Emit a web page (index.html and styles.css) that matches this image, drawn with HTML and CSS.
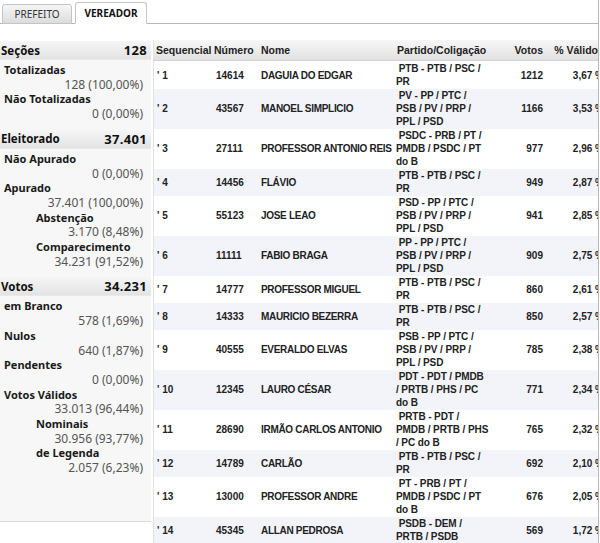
FILE: index.html
```html
<!DOCTYPE html>
<html lang="pt-BR">
<head>
<meta charset="utf-8">
<title>Resultado - Vereador</title>
<link rel="stylesheet" href="styles.css">
</head>
<body>
<div class="page">
  <div class="tabs">
    <div class="tab">PREFEITO</div>
    <div class="tab active">VEREADOR</div>
  </div>
  <div class="main">
    <aside class="summary">
      <div class="sec-head"><span>Seções</span><span class="sec-val">128</span></div>
      <div class="sec-body">
        <div class="lbl">Totalizadas</div>
        <div class="val">128 (100,00%)</div>
        <div class="lbl">Não Totalizadas</div>
        <div class="val">0 (0,00%)</div>
      </div>
      <div class="sec-head"><span>Eleitorado</span><span class="sec-val">37.401</span></div>
      <div class="sec-body">
        <div class="lbl">Não Apurado</div>
        <div class="val">0 (0,00%)</div>
        <div class="lbl">Apurado</div>
        <div class="val">37.401 (100,00%)</div>
        <div class="lbl sub">Abstenção</div>
        <div class="val">3.170 (8,48%)</div>
        <div class="lbl sub">Comparecimento</div>
        <div class="val">34.231 (91,52%)</div>
      </div>
      <div class="sec-head"><span>Votos</span><span class="sec-val">34.231</span></div>
      <div class="sec-body last">
        <div class="lbl">em Branco</div>
        <div class="val">578 (1,69%)</div>
        <div class="lbl">Nulos</div>
        <div class="val">640 (1,87%)</div>
        <div class="lbl">Pendentes</div>
        <div class="val">0 (0,00%)</div>
        <div class="lbl">Votos Válidos</div>
        <div class="val">33.013 (96,44%)</div>
        <div class="lbl sub">Nominais</div>
        <div class="val">30.956 (93,77%)</div>
        <div class="lbl sub">de Legenda</div>
        <div class="val">2.057 (6,23%)</div>
      </div>
    </aside>
    <div class="results">
      <table class="grid">
        <colgroup>
          <col class="c-seq"><col class="c-num"><col class="c-nome"><col class="c-part"><col class="c-votos"><col class="c-pct">
        </colgroup>
        <thead>
          <tr><th class="t-seq">Sequencial</th><th class="t-num">Número</th><th class="t-nome">Nome</th><th class="t-part">Partido/Coligação</th><th class="t-votos">Votos</th><th class="t-pct">% Válido</th></tr>
        </thead>
        <tbody>
          <tr><td class="seq">' 1</td><td class="num">14614</td><td class="nome">DAGUIA DO EDGAR</td><td class="part">&nbsp;PTB - PTB / PSC /<br>PR</td><td class="votos">1212</td><td class="pct">3,67 %</td></tr>
          <tr><td class="seq">' 2</td><td class="num">43567</td><td class="nome">MANOEL SIMPLICIO</td><td class="part">&nbsp;PV - PP / PTC /<br>PSB / PV / PRP /<br>PPL / PSD</td><td class="votos">1166</td><td class="pct">3,53 %</td></tr>
          <tr><td class="seq">' 3</td><td class="num">27111</td><td class="nome">PROFESSOR ANTONIO REIS</td><td class="part">&nbsp;PSDC - PRB / PT /<br>PMDB / PSDC / PT<br>do B</td><td class="votos">977</td><td class="pct">2,96 %</td></tr>
          <tr><td class="seq">' 4</td><td class="num">14456</td><td class="nome">FLÁVIO</td><td class="part">&nbsp;PTB - PTB / PSC /<br>PR</td><td class="votos">949</td><td class="pct">2,87 %</td></tr>
          <tr><td class="seq">' 5</td><td class="num">55123</td><td class="nome">JOSE LEAO</td><td class="part">&nbsp;PSD - PP / PTC /<br>PSB / PV / PRP /<br>PPL / PSD</td><td class="votos">941</td><td class="pct">2,85 %</td></tr>
          <tr><td class="seq">' 6</td><td class="num">11111</td><td class="nome">FABIO BRAGA</td><td class="part">&nbsp;PP - PP / PTC /<br>PSB / PV / PRP /<br>PPL / PSD</td><td class="votos">909</td><td class="pct">2,75 %</td></tr>
          <tr><td class="seq">' 7</td><td class="num">14777</td><td class="nome">PROFESSOR MIGUEL</td><td class="part">&nbsp;PTB - PTB / PSC /<br>PR</td><td class="votos">860</td><td class="pct">2,61 %</td></tr>
          <tr><td class="seq">' 8</td><td class="num">14333</td><td class="nome">MAURICIO BEZERRA</td><td class="part">&nbsp;PTB - PTB / PSC /<br>PR</td><td class="votos">850</td><td class="pct">2,57 %</td></tr>
          <tr><td class="seq">' 9</td><td class="num">40555</td><td class="nome">EVERALDO ELVAS</td><td class="part">&nbsp;PSB - PP / PTC /<br>PSB / PV / PRP /<br>PPL / PSD</td><td class="votos">785</td><td class="pct">2,38 %</td></tr>
          <tr><td class="seq">' 10</td><td class="num">12345</td><td class="nome">LAURO CÉSAR</td><td class="part">&nbsp;PDT - PDT / PMDB<br>/ PRTB / PHS / PC<br>do B</td><td class="votos">771</td><td class="pct">2,34 %</td></tr>
          <tr><td class="seq">' 11</td><td class="num">28690</td><td class="nome">IRMÃO CARLOS ANTONIO</td><td class="part">&nbsp;PRTB - PDT /<br>PMDB / PRTB / PHS<br>/ PC do B</td><td class="votos">765</td><td class="pct">2,32 %</td></tr>
          <tr><td class="seq">' 12</td><td class="num">14789</td><td class="nome">CARLÃO</td><td class="part">&nbsp;PTB - PTB / PSC /<br>PR</td><td class="votos">692</td><td class="pct">2,10 %</td></tr>
          <tr><td class="seq">' 13</td><td class="num">13000</td><td class="nome">PROFESSOR ANDRE</td><td class="part">&nbsp;PT - PRB / PT /<br>PMDB / PSDC / PT<br>do B</td><td class="votos">676</td><td class="pct">2,05 %</td></tr>
          <tr><td class="seq">' 14</td><td class="num">45345</td><td class="nome">ALLAN PEDROSA</td><td class="part">&nbsp;PSDB - DEM /<br>PRTB / PSDB</td><td class="votos">569</td><td class="pct">1,72 %</td></tr>
        </tbody>
      </table>
    </div>
  </div>
</div>
</body>
</html>
```

FILE: styles.css
```css
html, body {
  margin: 0;
  padding: 0;
  background: #ffffff;
}

body {
  font-family: "Noto Sans", "DejaVu Sans", sans-serif;
  color: #1a1a1a;
  overflow: hidden;
}

.page {
  width: 598px;
  height: 543px;
  overflow: hidden;
  border-right: 1px solid #b8b8b8;
}

/* tabs */
.tabs {
  display: flex;
  align-items: flex-end;
  gap: 3px;
  height: 23px;
  padding-left: 2px;
  border-bottom: 1px solid #b5b5b5;
}

.tab {
  box-sizing: border-box;
  height: 20px;
  width: 70px;
  margin-bottom: -1px;
  border: 1px solid #c4c4c4;
  border-radius: 3px 3px 0 0;
  background: linear-gradient(#f6f6f6, #dcdcdc);
  font-size: 10px;
  line-height: 19px;
  text-align: center;
  color: #333;
}

.tab.active {
  width: 72px;
  height: 22px;
  line-height: 21px;
  background: #ffffff;
  border-bottom-color: #ffffff;
  font-weight: bold;
  color: #111;
}

/* main area */
.main {
  display: flex;
  align-items: flex-start;
  margin-top: 16px;
}

.summary {
  width: 151px;
  flex: none;
  margin-top: 1px;
  background: #f7f7f7;
  border-bottom: 1px solid #dcdcdc;
}

.sec-head {
  display: flex;
  justify-content: space-between;
  align-items: center;
  height: 18px;
  padding: 0 4px 0 1px;
  background: linear-gradient(#f6f6f6, #e3e3e3);
  border-bottom: 1px solid #e9e9e9;
  font-size: 11.5px;
  font-weight: bold;
  color: #111;
}

.sec-val {
  font-size: 13px;
  letter-spacing: 0.3px;
}

.sec-body {
  padding: 3px 8px 8px 4px;
  line-height: 14.7px;
}

.sec-body.last {
  padding-bottom: 45px;
}

.lbl {
  font-size: 11px;
  font-weight: bold;
  color: #1a1a1a;
}

.lbl.sub {
  padding-left: 32px;
}

.val {
  font-size: 12px;
  text-align: right;
  color: #555;
}

/* results grid */
.results {
  flex: 1;
  min-width: 0;
  overflow: hidden;
  margin-left: 2px;
  border-left: 1px solid #e2e2e2;
  height: 503px;
}

.grid {
  table-layout: fixed;
  border-collapse: collapse;
  width: 452px;
  font-family: "Liberation Sans", Arial, sans-serif;
  font-weight: bold;
  color: #222;
}

.c-seq { width: 59px; }
.c-num { width: 46px; }
.c-nome { width: 136px; }
.c-part { width: 105px; }
.c-votos { width: 46px; }
.c-pct { width: 60px; }

.grid th {
  height: 20px;
  padding: 0;
  background: linear-gradient(#f7f7f7, #e1e1e1);
  border-bottom: 1px solid #d2d2d2;
  font-size: 10.5px;
  text-align: left;
  white-space: nowrap;
  color: #222;
}

.t-seq { padding-left: 2px !important; }
.t-num { padding-left: 1px !important; }
.t-nome { padding-left: 2px !important; }
.t-part { padding-left: 2px !important; }
.t-votos { text-align: right !important; padding-right: 3px !important; }
.t-pct { text-align: right !important; padding-right: 8px !important; }

.grid td {
  padding: 0 0 1px 0;
  font-size: 10px;
  line-height: 13px;
  vertical-align: middle;
  white-space: nowrap;
}

.grid tbody tr:nth-child(even) td {
  background: #f2f4f9;
}

.grid tbody tr:first-child td {
  padding-top: 1px;
}

td.seq { padding-left: 3px; }
td.num { padding-left: 3px; }
td.nome { padding-left: 2px; letter-spacing: -0.3px; }
td.part { padding-left: 1px; letter-spacing: -0.1px; }
td.votos { text-align: right; padding-right: 3px; }
td.pct { text-align: right; padding-right: 2px; }
```
